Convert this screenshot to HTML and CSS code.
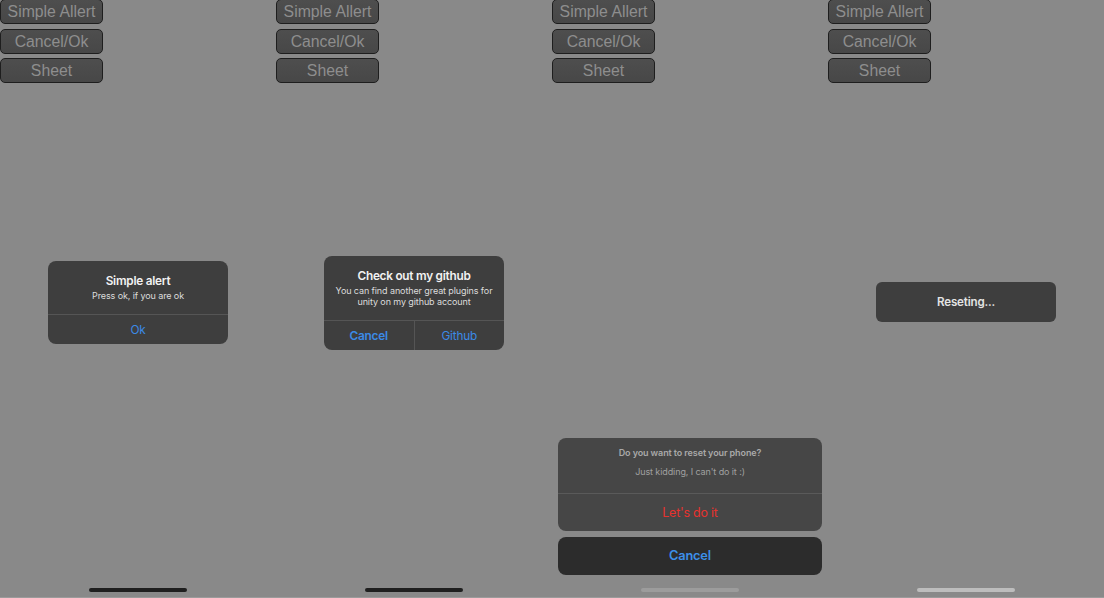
FILE: index.html
```html
<!DOCTYPE html>
<html>
<head>
<meta charset="utf-8">
<link rel="stylesheet" href="styles.css">
</head>
<body>
<div class="screens">
  <section class="screen">
    <div class="menu">
      <div class="btn">Simple Allert</div>
      <div class="btn">Cancel/Ok</div>
      <div class="btn">Sheet</div>
    </div>
    <div class="alert alert-simple">
      <div class="alert-body">
        <div class="alert-title">Simple alert</div>
        <div class="alert-msg">Press ok, if you are ok</div>
      </div>
      <div class="alert-actions">
        <div class="action">Ok</div>
      </div>
    </div>
    <div class="home dark"></div>
  </section>

  <section class="screen">
    <div class="menu">
      <div class="btn">Simple Allert</div>
      <div class="btn">Cancel/Ok</div>
      <div class="btn">Sheet</div>
    </div>
    <div class="alert alert-github">
      <div class="alert-body">
        <div class="alert-title">Check out my github</div>
        <div class="alert-msg">You can find another great plugins for<br>unity on my github account</div>
      </div>
      <div class="alert-actions split">
        <div class="action bold">Cancel</div>
        <div class="action">Github</div>
      </div>
    </div>
    <div class="home dark"></div>
  </section>

  <section class="screen">
    <div class="menu">
      <div class="btn">Simple Allert</div>
      <div class="btn">Cancel/Ok</div>
      <div class="btn">Sheet</div>
    </div>
    <div class="sheet">
      <div class="sheet-group">
        <div class="sheet-head">
          <div class="sheet-title">Do you want to reset your phone?</div>
          <div class="sheet-msg">Just kidding, I can't do it :)</div>
        </div>
        <div class="sheet-action destructive">Let's do it</div>
      </div>
      <div class="sheet-cancel">Cancel</div>
    </div>
    <div class="home faint"></div>
  </section>

  <section class="screen">
    <div class="menu">
      <div class="btn">Simple Allert</div>
      <div class="btn">Cancel/Ok</div>
      <div class="btn">Sheet</div>
    </div>
    <div class="toast">Reseting...</div>
    <div class="home light"></div>
  </section>
</div>
</body>
</html>
```

FILE: styles.css
```css
html, body {
  margin: 0;
  padding: 0;
  background: #898989;
}

.screens {
  display: grid;
  grid-template-columns: repeat(4, 276px);
  width: 1104px;
  height: 598px;
  overflow: hidden;
}

.screen {
  position: relative;
  height: 597px;
  background: #898989;
  border-bottom: 1px solid #9b9b9b;
}

.menu {
  display: flex;
  flex-direction: column;
  gap: 4.5px;
  width: 103px;
  margin-top: -1px;
}

.btn {
  box-sizing: border-box;
  height: 25px;
  border: 1.7px solid #1e1e1e;
  border-radius: 5px;
  background: linear-gradient(#4e4e4e, #474747);
  color: #8e8e8e;
  font-family: "Liberation Sans", Arial, sans-serif;
  font-size: 15.8px;
  line-height: 24px;
  text-align: center;
  white-space: nowrap;
}

/* Alerts */
.alert {
  position: absolute;
  left: 48px;
  width: 180px;
  background: #3e3e3e;
  border-radius: 8px;
  font-family: Inter, "Noto Sans", sans-serif;
  text-align: center;
  overflow: hidden;
}

.alert-simple { top: 261px; }
.alert-github { top: 256px; }

.alert-body {
  padding: 13px 4px 13px;
}

.alert-title {
  color: #f2f2f2;
  font-size: 11.8px;
  font-weight: 600;
  letter-spacing: -0.25px;
  line-height: 14px;
  white-space: nowrap;
}

.alert-msg {
  margin-top: 2px;
  color: #dcdcdc;
  font-size: 9px;
  letter-spacing: -0.1px;
  line-height: 11px;
  white-space: nowrap;
}

.alert-actions {
  display: flex;
  border-top: 1px solid #555555;
}

.action {
  flex: 1;
  height: 29px;
  line-height: 30px;
  color: #3b8ae6;
  font-size: 11.8px;
  letter-spacing: -0.2px;
}

.action.bold { font-weight: 600; }

.split .action + .action {
  border-left: 1px solid #555555;
}

/* Action sheet */
.sheet {
  position: absolute;
  left: 6px;
  top: 438px;
  width: 264px;
  display: flex;
  flex-direction: column;
  gap: 6px;
  font-family: Inter, "Noto Sans", sans-serif;
  text-align: center;
}

.sheet-group {
  background: #464646;
  border-radius: 8px;
  overflow: hidden;
}

.sheet-head {
  padding: 9px 10px 15px;
  border-bottom: 1px solid #5a5a5a;
}

.sheet-title {
  color: #a9a9a9;
  font-size: 9px;
  font-weight: 600;
  letter-spacing: -0.1px;
  line-height: 12px;
}

.sheet-msg {
  margin-top: 7px;
  color: #a0a0a0;
  font-size: 9px;
  letter-spacing: -0.1px;
  line-height: 12px;
}

.sheet-action {
  height: 37px;
  line-height: 38px;
  font-size: 12.4px;
  letter-spacing: -0.2px;
}

.destructive { color: #e8322e; }

.sheet-cancel {
  height: 38px;
  line-height: 38px;
  background: #2c2c2c;
  border-radius: 8px;
  color: #3c8fe8;
  font-size: 12.8px;
  font-weight: 600;
  letter-spacing: -0.2px;
}

/* Toast */
.toast {
  position: absolute;
  left: 48px;
  top: 282px;
  width: 180px;
  height: 40px;
  line-height: 40px;
  background: #3e3e3e;
  border-radius: 6px;
  color: #e4e4e4;
  font-family: Inter, "Noto Sans", sans-serif;
  font-size: 11.6px;
  font-weight: 600;
  letter-spacing: -0.2px;
  text-align: center;
}

/* Home indicator */
.home {
  position: absolute;
  left: 89px;
  top: 588px;
  width: 98px;
  height: 4px;
  border-radius: 2px;
}

.home.dark { background: #1f1f1f; }
.home.faint { background: #9c9c9c; }
.home.light { background: #bdbdbd; }
```
